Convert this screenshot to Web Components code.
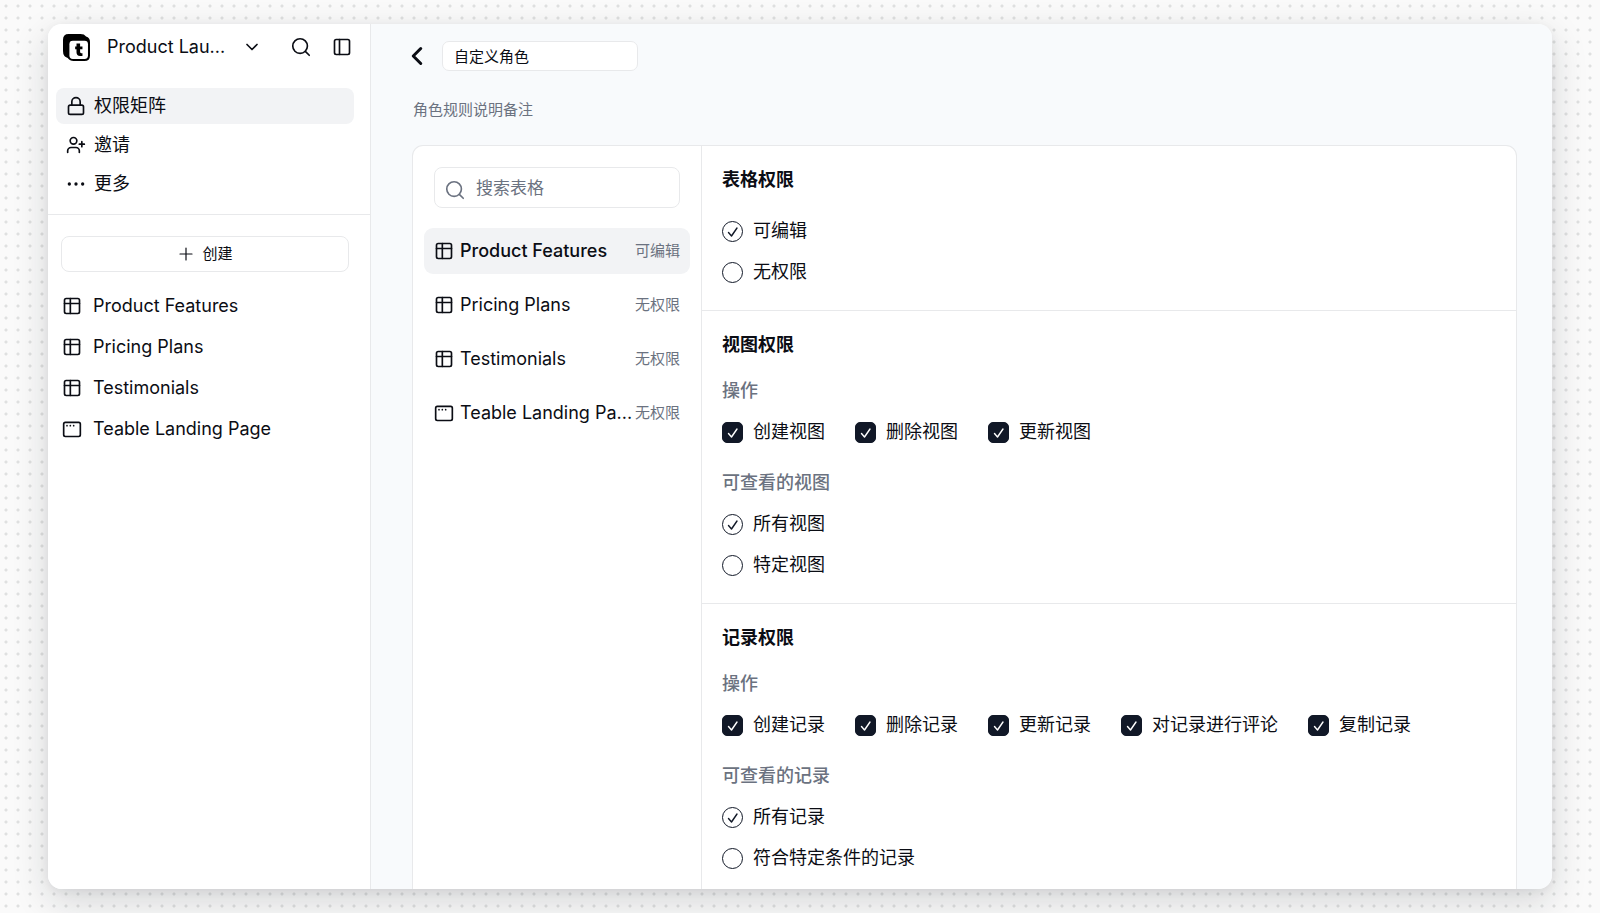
<!DOCTYPE html>
<html lang="zh-CN">
<head>
<meta charset="utf-8">
<meta name="viewport" content="width=device-width, initial-scale=1">
<title>权限矩阵</title>
<style>
  :root {
    --ink: #0b0d14;
    --muted: #6b7280;
    --line: #e8e9eb;
    --soft: #f2f3f5;
    --canvas: #f8fafc;
    --primary: #111827;
  }
  html, body { height: 100%; }
  body {
    margin: 0;
    font: 18px/26px Inter, "Noto Sans CJK SC", sans-serif;
    color: var(--ink);
  }
</style>
</head>
<body>
<app-window>
  <app-sidebar slot="side"></app-sidebar>
  <role-editor>
    <table-list slot="tables"></table-list>
    <perm-section heading="表格权限" first>
      <option-group type="radio" label="表格权限" items="可编辑|无权限" checked="1"></option-group>
    </perm-section>
    <perm-section heading="视图权限" grouped>
      <option-group type="checkbox" caption="操作" items="创建视图|删除视图|更新视图" checked="3"></option-group>
      <option-group type="radio" caption="可查看的视图" items="所有视图|特定视图" checked="1"></option-group>
    </perm-section>
    <perm-section heading="记录权限" grouped>
      <option-group type="checkbox" caption="操作" items="创建记录|删除记录|更新记录|对记录进行评论|复制记录" checked="5"></option-group>
      <option-group type="radio" caption="可查看的记录" items="所有记录|符合特定条件的记录" checked="1"></option-group>
    </perm-section>
  </role-editor>
</app-window>

<script>
const base = `:host,*{box-sizing:border-box}
  button,input{font:inherit;color:inherit;margin:0}
  button{background:none;border:0;padding:0;cursor:pointer}
  a{color:inherit;text-decoration:none}
  ul{list-style:none;margin:0;padding:0}
  h2,h3,p{margin:0}`;

class Base extends HTMLElement {
  constructor() { super(); this.attachShadow({ mode: 'open' }); }
  connectedCallback() {
    this.shadowRoot.innerHTML = `<style>${base}${this.css()}</style>${this.html()}`;
  }
}

/* Icons share a 24-unit grid and take their colour from the text. */
const icons = {
  logo: `<path fill="#000" stroke="none" d="M5 0h10.500q3.500 0 5 2.200Q24 3.300 24 7v12q0 5-5 5H9.500Q6 24 4.200 21.300Q0 20 0 15V5Q0 0 5 0Z"/>
    <rect x="5.700" y="6" width="16.500" height="16.200" rx="3" fill="#fff" stroke="none"/>
    <path fill="#000" stroke="none" d="M12 8.500h3.200v2.500h2.100v2.500h-2.100v2.600q0 1 1 1h1.100v2.500h-2.100q-3.200 0-3.200-3.300v-2.800h-1.200v-2.500H12Z"/>`,
  chevron: `<path d="m6 9 6 6 6-6"/>`,
  back: `<path d="m15 18-6-6 6-6"/>`,
  search: `<circle cx="11" cy="11" r="8"/><path d="m21 21-4.300-4.300"/>`,
  panel: `<rect x="3" y="3" width="18" height="18" rx="2"/><path d="M9 3v18"/>`,
  lock: `<rect x="3" y="11" width="18" height="11" rx="2"/><path d="M7 11V7a5 5 0 0 1 10 0v4"/>`,
  invite: `<path d="M16 21v-2a4 4 0 0 0-4-4H6a4 4 0 0 0-4 4v2"/><circle cx="9" cy="7" r="4"/><path d="M19 8v6M22 11h-6"/>`,
  more: `<g fill="currentColor"><circle cx="4" cy="12" r="1"/><circle cx="12" cy="12" r="1"/><circle cx="20" cy="12" r="1"/></g>`,
  plus: `<path d="M4 12h16M12 4v16"/>`,
  table: `<rect x="3" y="3" width="18" height="18" rx="2"/><path d="M3 9h18M10 3v18"/>`,
  page: `<rect x="2" y="4" width="20" height="17" rx="2"/><path d="M6 8h.01M10 8h.01M14 8h.01"/>`
};
customElements.define('ui-icon', class extends Base {
  css() {
    return `:host{display:block;flex:none;width:var(--size,20px);height:var(--size,20px)}
      svg{display:block;width:100%;height:100%}`;
  }
  html() {
    return `<svg viewBox="0 0 24 24" fill="none" stroke="currentColor" stroke-width="${this.getAttribute('weight') || 2}"
      stroke-linecap="round" stroke-linejoin="round" aria-hidden="true">${icons[this.getAttribute('name')]}</svg>`;
  }
});

customElements.define('app-window', class extends Base {
  css() {
    return `:host{display:block;height:100vh;padding:24px 48px;overflow:hidden;background-color:#fafafa;
        background-image:radial-gradient(circle at 6px 6px,#dfe0e0 1px,transparent 2px);background-size:12px 12px}
      .shade{height:100%;border-radius:14px;box-shadow:0 12px 36px rgba(20,24,32,.16),0 2px 10px rgba(20,24,32,.06)}
      .frame{display:grid;grid-template:minmax(0,1fr)/323px minmax(0,1fr);height:100%;border-radius:14px;
        background:var(--canvas);overflow:hidden}`;
  }
  html() { return `<div class="shade"><div class="frame"><slot name="side"></slot><slot></slot></div></div>`; }
});

customElements.define('app-sidebar', class extends Base {
  css() {
    return `:host{display:flex;flex-direction:column;background:#fff;border-right:1px solid var(--line)}
      header{display:flex;align-items:center;padding:0 18px 0 15px;height:46px}
      .space{display:flex;align-items:center;flex:1}
      .space span{margin:0 auto 0 17px}
      .space ui-icon:first-child{--size:27px}
      .tool{margin-left:20px}
      .space+.tool{margin-left:28px;--size:22px}
      .menu{display:grid;gap:3px;padding:18px 16px 12px 8px}
      .menu a{display:flex;align-items:center;gap:8px;height:36px;padding:0 10px;border-radius:8px}
      .menu .on{background:var(--soft)}
      .body{border-top:1px solid var(--line);padding:21px 21px 0 13px}
      .add{display:flex;align-items:center;justify-content:center;gap:7px;width:100%;height:36px;padding-bottom:1px;
        border:1px solid var(--line);border-radius:8px;font-size:15px}
      .body ul{padding-top:13px}
      .body a{display:flex;align-items:center;gap:11px;height:41px;padding-left:1px}`;
  }
  html() {
    const item = (i, t, on) => `<li><a href="#"${on ? ' class="on" aria-current="page"' : ''}><ui-icon name="${i}"></ui-icon>${t}</a></li>`;
    return `<header>
        <button class="space"><ui-icon name="logo"></ui-icon><span>Product Lau...</span><ui-icon name="chevron"></ui-icon></button>
        <button class="tool" aria-label="搜索"><ui-icon name="search" weight="1.8"></ui-icon></button>
        <button class="tool" aria-label="折叠侧栏"><ui-icon name="panel"></ui-icon></button>
      </header>
      <ul class="menu">${item('lock', '权限矩阵', true)}${item('invite', '邀请')}${item('more', '更多')}</ul>
      <nav class="body">
        <button class="add"><ui-icon name="plus" weight="1.6" style="--size:18px"></ui-icon>创建</button>
        <ul>${item('table', 'Product Features')}${item('table', 'Pricing Plans')}${item('table', 'Testimonials')}${item('page', 'Teable Landing Page')}</ul>
      </nav>`;
  }
});

customElements.define('role-editor', class extends Base {
  css() {
    return `:host{display:flex;flex-direction:column;min-width:0;min-height:0;padding:17px 35px 0 41px;overflow:hidden}
      header{display:flex;flex:none;align-items:center;gap:10px;height:30px}
      .back{margin-left:-10px;--size:30px}
      header input{width:196px;height:30px;padding:0 11px 2px;border:1px solid var(--line);border-radius:7px;
        background:#fff;font-size:15px}
      p{padding:25px 1px 22px;font-size:15px;line-height:27px;color:var(--muted)}
      .panel{display:grid;grid-template-columns:288px minmax(0,1fr);flex:1 0 auto;border:1px solid var(--line);
        border-bottom:0;border-radius:11px 11px 0 0;background:#fff}
      .rules{border-left:1px solid var(--line)}`;
  }
  html() {
    return `<header><button class="back" aria-label="返回"><ui-icon name="back" weight="2.400"></ui-icon></button>
        <input type="text" aria-label="角色名称" value="自定义角色"></header>
      <p>角色规则说明备注</p>
      <div class="panel"><slot name="tables"></slot><div class="rules"><slot></slot></div></div>`;
  }
});

customElements.define('table-list', class extends Base {
  css() {
    return `:host{display:block;padding:21px 11px}
      label{display:flex;align-items:center;gap:10px;height:41px;margin:0 10px 20px;padding:0 9px;
        border:1px solid var(--line);border-radius:8px;color:var(--muted)}
      label ui-icon{margin-top:4px;--size:22px}
      input{flex:1;min-width:0;padding:0;border:0;outline:0;background:none;font-size:17px}
      input::placeholder{color:var(--muted);opacity:1}
      ul{display:grid;gap:8px}
      a{display:flex;align-items:center;height:46px;padding:0 10px;border-radius:9px}
      .on{background:var(--soft);font-weight:500}
      .name{margin:0 auto 0 6px;white-space:nowrap}
      .tag{font-size:15px;font-weight:400;color:var(--muted)}`;
  }
  html() {
    const row = (i, n, t, on) => `<li><a href="#"${on ? ' class="on" aria-current="true"' : ''}><ui-icon name="${i}"></ui-icon><span class="name">${n}</span><span class="tag">${t}</span></a></li>`;
    return `<label><ui-icon name="search" weight="1.8"></ui-icon><input type="text" aria-label="搜索表格" placeholder="搜索表格"></label>
      <ul>${row('table', 'Product Features', '可编辑', true)}${row('table', 'Pricing Plans', '无权限')}${row('table', 'Testimonials', '无权限')}${row('page', 'Teable Landing Pa...', '无权限')}</ul>`;
  }
});

customElements.define('perm-section', class extends Base {
  css() {
    return `:host{display:grid;gap:25px;padding:21px 20px 25px;border-top:1px solid var(--line)}
      :host([first]){border-top:0}
      h2{font-size:18px;line-height:26px;font-weight:600}
      :host([grouped]) h2{margin-bottom:-5px}`;
  }
  html() { return `<h2>${this.getAttribute('heading')}</h2><slot></slot>`; }
});

customElements.define('option-group', class extends Base {
  css() {
    return `:host{display:block}
      fieldset{display:grid;gap:15px;margin:0;padding:0;border:0;min-width:0}
      h3{font-size:18px;line-height:26px;font-weight:500;color:var(--muted)}
      .checkbox{display:flex;flex-wrap:wrap;gap:15px 30px}
      .radio{display:grid;gap:15px;justify-items:start}
      label{display:flex;align-items:center;gap:10px}
      .box{display:grid;width:21px;height:21px}
      .box>*{grid-area:1/1;width:21px;height:21px}
      input{appearance:none;border:1px solid var(--primary);border-radius:50%}
      .checkbox input{border-radius:5px}
      .checkbox input:checked{background:var(--primary)}
      svg{fill:none;stroke:var(--primary);stroke-width:1.400;stroke-linecap:round;stroke-linejoin:round;pointer-events:none;visibility:hidden}
      .checkbox svg{stroke:#fff}
      input:checked+svg{visibility:visible}`;
  }
  html() {
    const a = n => this.getAttribute(n), type = a('type'), n = +a('checked');
    const list = a('items').split('|').map((t, i) => `<label><span class="box"><input type="${type}" name="choice"${i < n ? ' checked' : ''}><svg viewBox="0 0 21 21" aria-hidden="true"><path d="m6.500 11.500 3 3.500 5.500-8"/></svg></span>${t}</label>`).join('');
    return `<fieldset aria-label="${a('caption') || a('label')}">${a('caption') ? `<h3>${a('caption')}</h3>` : ''}<div class="${type}">${list}</div></fieldset>`;
  }
});
</script>
</body>
</html>
